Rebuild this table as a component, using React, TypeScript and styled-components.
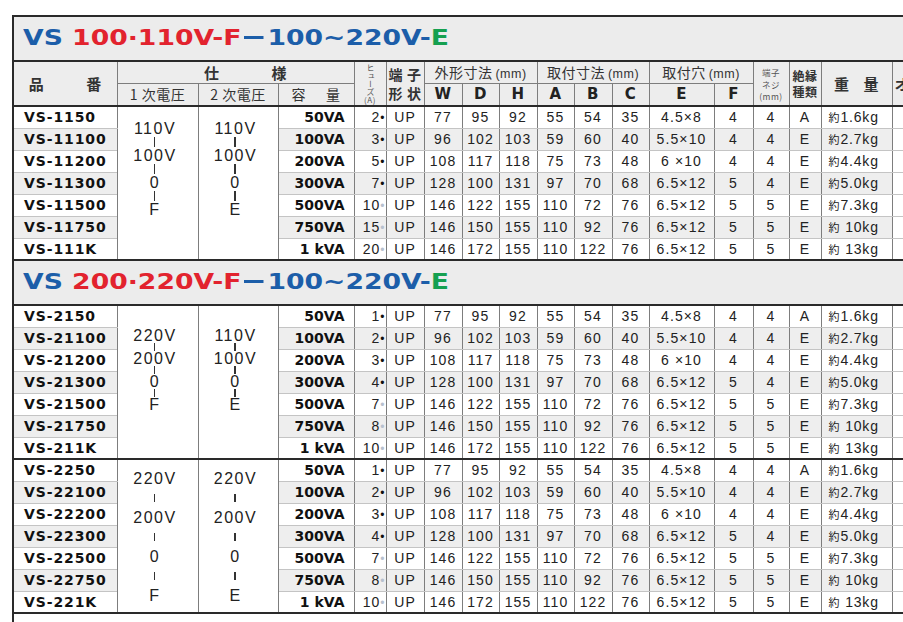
import React from "react"
import styled, {createGlobalStyle, css} from "styled-components"

const ink = "#2a2a2a"
const vLine = "#7d7d7d"
const hLine = "#c4c4c4"
const shade = "#eeeeee"
const headBg = "#ededed"

const GlobalStyle = createGlobalStyle`
	html, body {
		margin: 0;
		padding: 0;
		background: #fff;
	}
	body {
		width: 903px;
		height: 622px;
		overflow: hidden;
		font-family: "Liberation Sans", Arial, sans-serif;
	}
`

//region layout
const Page = styled.div`
	box-sizing: border-box;
	width: 903px;
	height: 622px;
	padding: 15px 0 0 12px;
	overflow: hidden;
`

const Table = styled.table`
	border-collapse: collapse;
	table-layout: fixed;
	width: 939px;
	border: 2px solid ${ink};
	color: #222;
`

const Col = styled.col<{$w: number}>`
	width: ${({$w}) => $w}px;
`

const cellBase = css`
	padding: 0;
	border-left: 1px solid ${vLine};
	border-right: 1px solid ${vLine};
	border-bottom: 1px solid ${hLine};
	white-space: nowrap;
	overflow: hidden;
`
//endregion

//region title band
const TitleRow = styled.tr`
	height: 45px;
`

const TitleCell = styled.td`
	padding: 0 0 2px 9px;
	background: #ececec;
	border-top: 2px solid ${ink};
	border-bottom: 2px solid ${ink};
	text-align: left;
	vertical-align: middle;
	overflow: hidden;
`

const TitleText = styled.div`
	display: inline-block;
	font-family: "DejaVu Sans", "Noto Sans CJK JP", sans-serif;
	font-weight: 700;
	font-size: 20.5px;
	white-space: nowrap;
	transform: scaleX(1.3);
	transform-origin: left center;
`

const Tone = styled.span<{$c: "blue" | "red" | "green"}>`
	color: ${({$c}) => ($c === "blue" ? "#1c5ea9" : $c === "red" ? "#e2232e" : "#15a050")};
`

const Dash = styled.span`
	display: inline-block;
	width: 15px;
	height: 3px;
	margin: 0 3px 0 2px;
	vertical-align: 6px;
	background: #1c5ea9;
`

const Title = ({first}: {first: string}) => (
	<TitleRow>
		<TitleCell colSpan={18}>
			<TitleText>
				<Tone $c="blue">VS </Tone>
				<Tone $c="red">{first}V-F</Tone>
				<Dash />
				<Tone $c="blue">100~220V-</Tone>
				<Tone $c="green">E</Tone>
			</TitleText>
		</TitleCell>
	</TitleRow>
)
//endregion

//region header
const HeadRow = styled.tr<{$h: number}>`
	height: ${({$h}) => $h}px;
`

const HeadCell = styled.th<{$latin?: boolean}>`
	${cellBase};
	background: ${headBg};
	border-bottom: 1px solid ${vLine};
	font-family: ${({$latin}) => ($latin ? `"DejaVu Sans", sans-serif` : `"Noto Sans CJK JP", sans-serif`)};
	font-weight: ${({$latin}) => ($latin ? 700 : 400)};
	font-size: ${({$latin}) => ($latin ? 15 : 14)}px;
	color: ${({$latin}) => ($latin ? "#222" : "#333")};
	text-align: center;
	vertical-align: middle;
	line-height: 1;
	letter-spacing: 0.5px;
`

const Spread = styled.div<{$gap: number; $size: number; $bold?: boolean; $shift?: number}>`
	display: flex;
	justify-content: center;
	gap: ${({$gap}) => $gap}px;
	padding-left: ${({$shift}) => $shift ?? 0}px;
	font-size: ${({$size}) => $size}px;
	font-weight: ${({$bold}) => ($bold ? 700 : 400)};
	color: #333;
`

const CutLabel = styled.div`
	padding-left: 2px;
	text-align: left;
	font-size: 15px;
	font-weight: 700;
	color: #333;
`

const Unit = styled.span`
	font-family: "Liberation Sans", Arial, sans-serif;
	font-size: 12.5px;
	margin-left: 3px;
`

const FuseLabel = styled.div`
	display: flex;
	flex-direction: column;
	align-items: center;
	font-size: 8px;
	line-height: 1;
	color: #555;
`

const Vertical = styled.span`
	writing-mode: vertical-rl;
	text-orientation: upright;
	letter-spacing: 0;
`

const Pair = styled.div`
	display: grid;
	grid-template-columns: repeat(2, auto);
	justify-content: center;
	column-gap: 4px;
	row-gap: 1px;
	font-size: 14px;
	line-height: 18px;
	font-weight: 700;
	color: #333;
`

const SmallStack = styled.div<{$size: number; $lh: number; $bold?: boolean}>`
	display: flex;
	flex-direction: column;
	align-items: center;
	font-size: ${({$size}) => $size}px;
	line-height: ${({$lh}) => $lh}px;
	font-weight: ${({$bold}) => ($bold ? 700 : 400)};
	color: ${({$bold}) => ($bold ? "#333" : "#555")};
`

const TableHead = () => (
	<thead>
		<HeadRow $h={22}>
			<HeadCell rowSpan={2}>
				<Spread $gap={42} $size={15} $bold>
					<span>品</span>
					<span>番</span>
				</Spread>
			</HeadCell>
			<HeadCell colSpan={3}>
				<Spread $gap={52} $size={15} $bold $shift={20}>
					<span>仕</span>
					<span>様</span>
				</Spread>
			</HeadCell>
			<HeadCell rowSpan={2}>
				<FuseLabel>
					<Vertical>ヒューズ</Vertical>
					<span>(A)</span>
				</FuseLabel>
			</HeadCell>
			<HeadCell rowSpan={2}>
				<Pair>
					<span>端</span>
					<span>子</span>
					<span>形</span>
					<span>状</span>
				</Pair>
			</HeadCell>
			<HeadCell colSpan={3}>
				外形寸法<Unit>(mm)</Unit>
			</HeadCell>
			<HeadCell colSpan={3}>
				取付寸法<Unit>(mm)</Unit>
			</HeadCell>
			<HeadCell colSpan={2}>
				取付穴<Unit>(mm)</Unit>
			</HeadCell>
			<HeadCell rowSpan={2}>
				<SmallStack $size={8.5} $lh={12}>
					<span>端子</span>
					<span>ネジ</span>
					<span>(mm)</span>
				</SmallStack>
			</HeadCell>
			<HeadCell rowSpan={2}>
				<SmallStack $size={12} $lh={16} $bold>
					<span>絶縁</span>
					<span>種類</span>
				</SmallStack>
			</HeadCell>
			<HeadCell rowSpan={2}>
				<Spread $gap={14} $size={15} $bold>
					<span>重</span>
					<span>量</span>
				</Spread>
			</HeadCell>
			<HeadCell rowSpan={2}>
				<CutLabel>オ</CutLabel>
			</HeadCell>
		</HeadRow>
		<HeadRow $h={23}>
			<HeadCell>1 次電圧</HeadCell>
			<HeadCell>2 次電圧</HeadCell>
			<HeadCell>
				<Spread $gap={20} $size={14}>
					<span>容</span>
					<span>量</span>
				</Spread>
			</HeadCell>
			{["W", "D", "H", "A", "B", "C", "E", "F"].map((l) => (
				<HeadCell
					key={l}
					$latin>
					{l}
				</HeadCell>
			))}
		</HeadRow>
	</thead>
)
//endregion

//region body
const BodyRow = styled.tr<{$shade: boolean; $groupStart: boolean}>`
	height: 22px;
	background: ${({$shade}) => ($shade ? shade : "#fff")};
	${({$groupStart}) =>
		$groupStart &&
		css`
			& > td {
				border-top: 2px solid ${ink};
			}
		`}
`

const ModelCell = styled.td`
	${cellBase};
	padding-left: 10px;
	font-family: "DejaVu Sans", sans-serif;
	font-weight: 700;
	font-size: 14px;
	letter-spacing: 0.9px;
	color: #111;
`

const VoltCell = styled.td<{$top: number}>`
	${cellBase};
	background: #fff;
	vertical-align: top;
	padding: ${({$top}) => $top}px 5px 0 0;
`

const VoltStack = styled.div<{$gap: number}>`
	display: flex;
	flex-direction: column;
	align-items: center;
	gap: ${({$gap}) => $gap}px;
	font-size: 16px;
	letter-spacing: 1.5px;
	line-height: 11px;
	color: #222;
`

const VoltBar = styled.span<{$h: number}>`
	display: block;
	width: 1.5px;
	height: ${({$h}) => $h}px;
	margin-right: 1.5px;
	background: #333;
`

const CapCell = styled.td`
	${cellBase};
	padding-right: 9px;
	text-align: right;
	font-family: "DejaVu Sans", sans-serif;
	font-weight: 700;
	font-size: 14px;
	color: #111;
`

const FuseCell = styled.td`
	${cellBase};
	padding-right: 1px;
	text-align: right;
	font-size: 14px;
	letter-spacing: 1px;
`

const Dot = styled.span<{$dim: boolean}>`
	font-size: 12px;
	letter-spacing: 0;
	color: ${({$dim}) => ($dim ? "#b8c1cf" : "#111")};
`

const NumCell = styled.td`
	${cellBase};
	text-align: center;
	font-size: 14px;
	letter-spacing: 1.1px;
`

const WeightCell = styled.td`
	${cellBase};
	padding-left: 7px;
	font-size: 14px;
	letter-spacing: 0.8px;
`

const Yaku = styled.span`
	font-family: "Noto Sans CJK JP", sans-serif;
	font-size: 11px;
	letter-spacing: 0;
	margin-right: 1px;
`

const BlankCell = styled.td`
	${cellBase};
	background: #fff;
`

const FootRow = styled.tr`
	height: 30px;
`

const FootCell = styled.td`
	border-top: 2px solid ${ink};
	background: #fff;
`
//endregion

type Spec = [number, number, number, number, number, number, string, number, number, string, string]

const specs: Spec[] = [
	[77, 95, 92, 55, 54, 35, "4.5×8", 4, 4, "A", "1.6kg"],
	[96, 102, 103, 59, 60, 40, "5.5×10", 4, 4, "E", "2.7kg"],
	[108, 117, 118, 75, 73, 48, "6 ×10", 4, 4, "E", "4.4kg"],
	[128, 100, 131, 97, 70, 68, "6.5×12", 5, 4, "E", "5.0kg"],
	[146, 122, 155, 110, 72, 76, "6.5×12", 5, 5, "E", "7.3kg"],
	[146, 150, 155, 110, 92, 76, "6.5×12", 5, 5, "E", " 10kg"],
	[146, 172, 155, 110, 122, 76, "6.5×12", 5, 5, "E", " 13kg"],
]

const caps = ["50VA", "100VA", "200VA", "300VA", "500VA", "750VA", "1 kVA"]

type Group = {
	models: string[]
	fuses: number[]
	primary: string
	secondary: string
	top: number
	gap: number
	bar: number
	groupStart: boolean
}

const groups: Group[] = [
	{
		models: ["VS-1150", "VS-11100", "VS-11200", "VS-11300", "VS-11500", "VS-11750", "VS-111K"],
		fuses: [2, 3, 5, 7, 10, 15, 20],
		primary: "110V",
		secondary: "110V",
		top: 16,
		gap: 3,
		bar: 10,
		groupStart: true,
	},
	{
		models: ["VS-2150", "VS-21100", "VS-21200", "VS-21300", "VS-21500", "VS-21750", "VS-211K"],
		fuses: [1, 2, 3, 4, 7, 8, 10],
		primary: "220V",
		secondary: "110V",
		top: 24,
		gap: 2,
		bar: 8,
		groupStart: false,
	},
	{
		models: ["VS-2250", "VS-22100", "VS-22200", "VS-22300", "VS-22500", "VS-22750", "VS-221K"],
		fuses: [1, 2, 3, 4, 7, 8, 10],
		primary: "220V",
		secondary: "220V",
		top: 13,
		gap: 10,
		bar: 8,
		groupStart: true,
	},
]

const low = (v: string) => (v === "110V" ? "100V" : "200V")

const Volts = ({high, end, group}: {high: string; end: string; group: Group}) => (
	<VoltCell
		rowSpan={7}
		$top={group.top}>
		<VoltStack $gap={group.gap}>
			<span>{high}</span>
			<VoltBar $h={group.bar} />
			<span>{low(high)}</span>
			<VoltBar $h={group.bar} />
			<span>0</span>
			<VoltBar $h={group.bar} />
			<span>{end}</span>
		</VoltStack>
	</VoltCell>
)

const GroupRows = ({group}: {group: Group}) => (
	<>
		{group.models.map((model, i) => {
			const [w, d, h, a, b, c, hole, f, neji, ins, weight] = specs[i]
			return (
				<BodyRow
					key={model}
					$shade={i % 2 === 1}
					$groupStart={group.groupStart && i === 0}>
					<ModelCell>{model}</ModelCell>
					{i === 0 && (
						<>
							<Volts
								high={group.primary}
								end="F"
								group={group}
							/>
							<Volts
								high={group.secondary}
								end="E"
								group={group}
							/>
						</>
					)}
					<CapCell>{caps[i]}</CapCell>
					<FuseCell>
						{group.fuses[i]}
						<Dot $dim={i > 3}>•</Dot>
					</FuseCell>
					<NumCell>UP</NumCell>
					{[w, d, h, a, b, c].map((n, k) => (
						<NumCell key={k}>{n}</NumCell>
					))}
					<NumCell>{hole}</NumCell>
					<NumCell>{f}</NumCell>
					<NumCell>{neji}</NumCell>
					<NumCell>{ins}</NumCell>
					<WeightCell>
						<Yaku>約</Yaku>
						{weight}
					</WeightCell>
					<BlankCell />
				</BodyRow>
			)
		})}
	</>
)

const widths = [104, 81, 80, 76, 32, 38, 38, 37, 38, 37, 38, 37, 65, 39, 36, 32, 71, 60]

export default function App() {
	return (
		<>
			<GlobalStyle />
			<Page>
				<Table>
					<colgroup>
						{widths.map((w, i) => (
							<Col
								key={i}
								$w={w}
							/>
						))}
					</colgroup>
					<thead>
						<Title first="100·110" />
					</thead>
					<TableHead />
					<tbody>
						<GroupRows group={groups[0]} />
						<Title first="200·220" />
						<GroupRows group={groups[1]} />
						<GroupRows group={groups[2]} />
						<FootRow>
							<FootCell colSpan={18} />
						</FootRow>
					</tbody>
				</Table>
			</Page>
		</>
	)
}
